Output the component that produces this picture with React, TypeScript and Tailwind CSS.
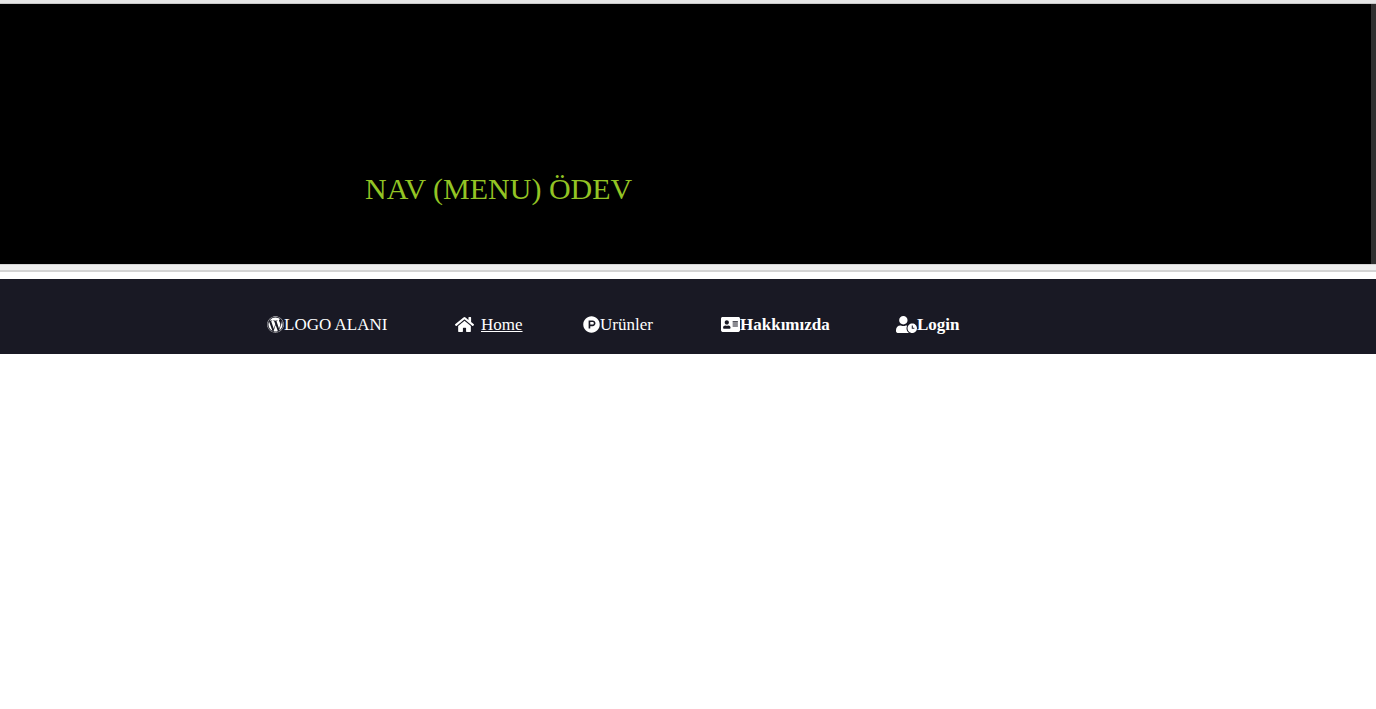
import { FaWordpress, FaHome, FaProductHunt, FaAddressCard, FaUserClock } from "react-icons/fa";

export default function App() {
  return (
    <div className="min-h-screen bg-white font-['Liberation_Serif',serif]">
      <header>
        <div className="h-1 border-b border-[#c8c8c8] bg-[#e6e6e6]" />
        <div className="flex h-65 items-end border-r-5 border-[#303030] bg-black pb-[55px] pl-[365px]">
          <h1 className="text-[30px] leading-10 text-[#93c424]">NAV (MENU) ÖDEV</h1>
        </div>
        <div className="h-2 border-t border-b-2 border-[#d4d4d4] bg-[#efefef]" />
      </header>
      <nav className="mt-[7px] bg-[#191924] pt-9 pb-5 pl-[267px] text-[17px] leading-[19px] text-white">
        <ul className="flex">
          <li className="w-[188px]">
            <a href="#" className="flex items-center">
              <FaWordpress className="h-[17px] w-[17px]" />
              LOGO ALANI
            </a>
          </li>
          <li className="w-[128px]">
            <a href="#home" className="flex items-center gap-[7px]">
              <FaHome className="h-[17px] w-[19px]" />
              <span className="underline">Home</span>
            </a>
          </li>
          <li className="w-[138px]">
            <a href="#urunler" className="flex items-center">
              <FaProductHunt className="h-[17px] w-[17px]" />
              Urünler
            </a>
          </li>
          <li className="w-[175px] font-bold">
            <a href="#hakkimizda" className="flex items-center">
              <FaAddressCard className="h-[17px] w-[19px]" />
              Hakkımızda
            </a>
          </li>
          <li className="font-bold">
            <a href="#login" className="flex items-center">
              <FaUserClock className="h-[17px] w-[21px]" />
              Login
            </a>
          </li>
        </ul>
      </nav>
    </div>
  );
}
